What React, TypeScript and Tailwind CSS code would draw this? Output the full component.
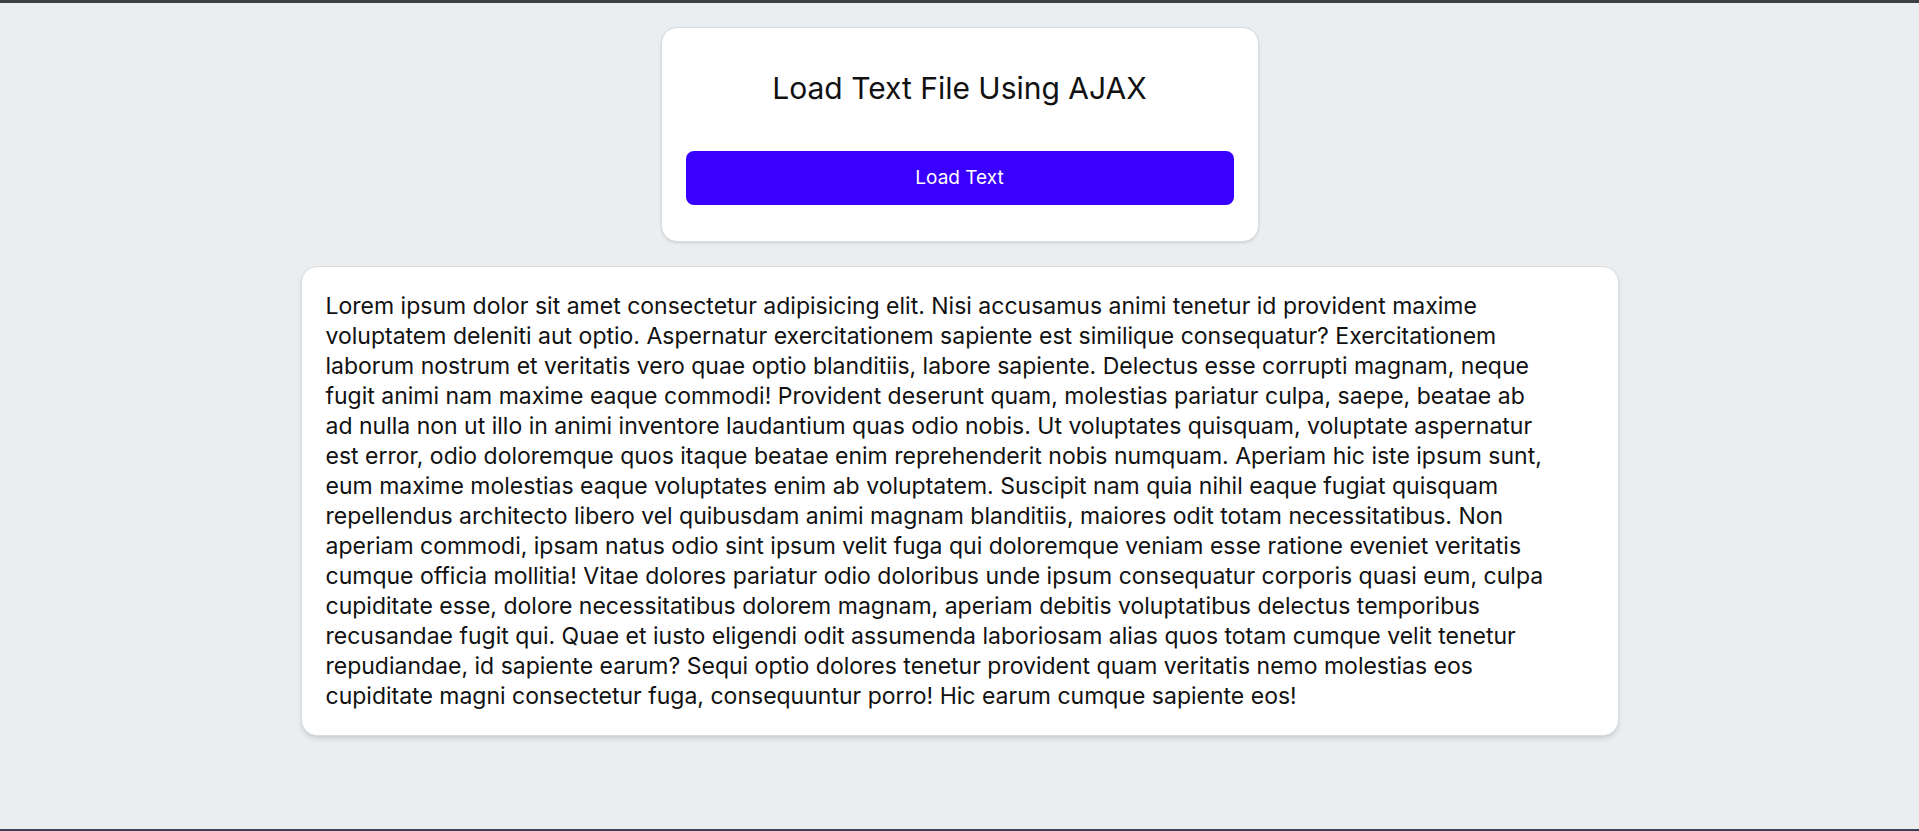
import React from 'react';

// line breaks follow the reference rendering
const LINES = [
  'Lorem ipsum dolor sit amet consectetur adipisicing elit. Nisi accusamus animi tenetur id provident maxime',
  'voluptatem deleniti aut optio. Aspernatur exercitationem sapiente est similique consequatur? Exercitationem',
  'laborum nostrum et veritatis vero quae optio blanditiis, labore sapiente. Delectus esse corrupti magnam, neque',
  'fugit animi nam maxime eaque commodi! Provident deserunt quam, molestias pariatur culpa, saepe, beatae ab',
  'ad nulla non ut illo in animi inventore laudantium quas odio nobis. Ut voluptates quisquam, voluptate aspernatur',
  'est error, odio doloremque quos itaque beatae enim reprehenderit nobis numquam. Aperiam hic iste ipsum sunt,',
  'eum maxime molestias eaque voluptates enim ab voluptatem. Suscipit nam quia nihil eaque fugiat quisquam',
  'repellendus architecto libero vel quibusdam animi magnam blanditiis, maiores odit totam necessitatibus. Non',
  'aperiam commodi, ipsam natus odio sint ipsum velit fuga qui doloremque veniam esse ratione eveniet veritatis',
  'cumque officia mollitia! Vitae dolores pariatur odio doloribus unde ipsum consequatur corporis quasi eum, culpa',
  'cupiditate esse, dolore necessitatibus dolorem magnam, aperiam debitis voluptatibus delectus temporibus',
  'recusandae fugit qui. Quae et iusto eligendi odit assumenda laboriosam alias quos totam cumque velit tenetur',
  'repudiandae, id sapiente earum? Sequi optio dolores tenetur provident quam veritatis nemo molestias eos',
  'cupiditate magni consectetur fuga, consequuntur porro! Hic earum cumque sapiente eos!',
];

export default function App() {
  return (
    <div className="h-screen box-border overflow-hidden bg-[#ebeef1] border-t-[3px] border-t-[#3c3f44] border-b-2 border-b-[#3a4055] font-['Inter',sans-serif] text-[#111]">
      <div className="flex flex-col items-center pt-6 gap-6">
        {/* Loader card */}
        <div className="w-[598px] bg-white border border-[#d9dcdf] rounded-2xl px-6 pt-9 pb-[36px] shadow-sm">
          <h1 className="text-[30px] leading-[48px] text-center font-normal">Load Text File Using AJAX</h1>
          <button className="mt-[39px] w-full h-[54px] rounded-lg bg-[#3a00ff] text-white text-[19px]">
            Load Text
          </button>
        </div>

        {/* Output card */}
        <div className="w-[1318px] bg-white border border-[#d9dcdf] rounded-2xl p-6 shadow-md">
          <p className="text-[23px] leading-[30px]">
            {LINES.map((line, i) => (
              <span key={i} className="block whitespace-nowrap">
                {line}
              </span>
            ))}
          </p>
        </div>
      </div>
    </div>
  );
}
